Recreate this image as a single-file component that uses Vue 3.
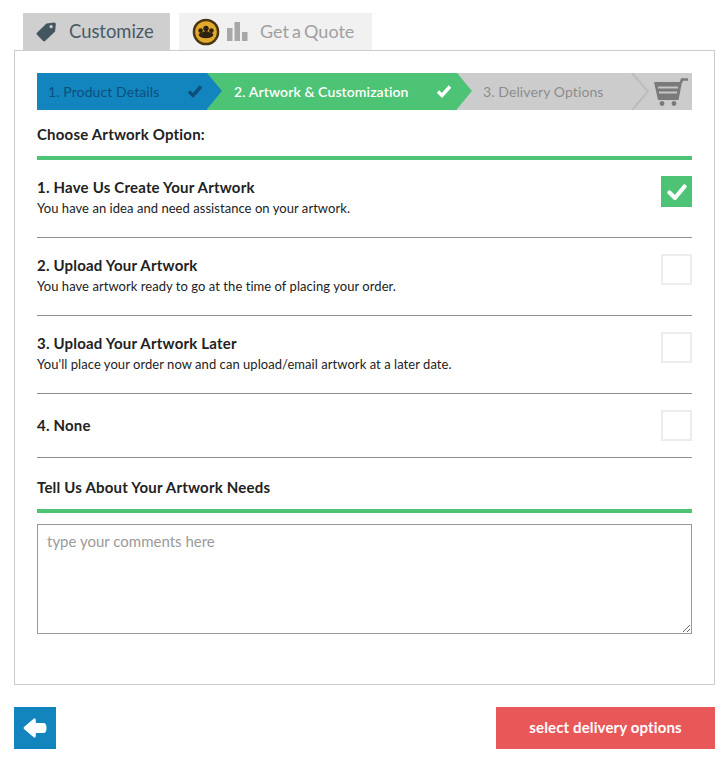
<template>
  <div class="page">
    <div class="tabs">
      <div class="tab active">
        <svg class="tag" viewBox="0 0 22 22" width="21" height="21">
          <path d="M11 2.500 L19 1.500 Q20.800 1.500 20.800 3.200 L20 11 L9.500 21 Q8.500 22 7.400 21 L1 14.400 Q0 13.300 1 12.300 Z M15.800 4.200 a1.700 1.700 0 1 0 .01 0 Z" fill="#43555f" fill-rule="evenodd" />
        </svg>
        <span>Customize</span>
      </div>
      <div class="tab quote">
        <svg class="badge" viewBox="0 0 28 28" width="28" height="28">
          <circle cx="14" cy="14" r="13.300" fill="#4a3412" />
          <circle cx="14" cy="14" r="10.800" fill="#e2aa2c" />
          <circle cx="8.600" cy="12.600" r="2.300" fill="#2e2310" />
          <circle cx="14" cy="10.500" r="2.700" fill="#2e2310" />
          <circle cx="19.400" cy="12.600" r="2.300" fill="#2e2310" />
          <path d="M6.500 17q1-3 3.500-2.500q1.500-1.500 4-1.500q2.500 0 4 1.500q2.500-.5 3.500 2.500q-2 3.200-7.500 3.200T6.500 17Z" fill="#2e2310" />
        </svg>
        <svg class="bars" viewBox="0 0 21 19" width="21" height="19">
          <rect x="0" y="6" width="5.500" height="13" fill="#a8a8a8" />
          <rect x="7.500" y="0" width="5.500" height="19" fill="#a8a8a8" />
          <rect x="15" y="10" width="5.500" height="9" fill="#a8a8a8" />
        </svg>
        <span>Get a Quote</span>
      </div>
    </div>

    <div class="panel">
      <div class="steps">
        <div class="step one">
          <span>1. Product Details</span>
          <svg class="tick" viewBox="0 0 16 14" width="16" height="14"><path d="M2 7.500l4 4 8-9" fill="none" stroke="#0e4f7a" stroke-width="3.400" /></svg>
          <i class="arrow blue"></i>
        </div>
        <div class="step two">
          <span>2. Artwork &amp; Customization</span>
          <svg class="tick" viewBox="0 0 16 14" width="16" height="14"><path d="M2 7.500l4 4 8-9" fill="none" stroke="#fff" stroke-width="3.400" /></svg>
          <i class="arrow green"></i>
        </div>
        <div class="step three">
          <span>3. Delivery Options</span>
          <svg class="chev" viewBox="0 0 20 37" width="20" height="37"><path d="M1 0l16 18.500L1 37" fill="none" stroke="#bcbcbc" stroke-width="2" /></svg>
          <svg class="cart" viewBox="0 0 34 28" width="34" height="28">
            <path d="M27 4.500l1-3h6" fill="none" stroke="#7a7a7a" stroke-width="2.600" />
            <path d="M0 4h28l-3.500 18H4Z" fill="#7a7a7a" />
            <path d="M4 9.500h20M5 14.500h18" stroke="#c6c6c6" stroke-width="1.800" />
            <circle cx="8" cy="25.500" r="2.400" fill="#7a7a7a" />
            <circle cx="20" cy="25.500" r="2.400" fill="#7a7a7a" />
          </svg>
        </div>
      </div>

      <h3 class="heading first">Choose Artwork Option:</h3>
      <div class="rule"></div>

      <div
        v-for="opt in options"
        :key="opt.title"
        class="option"
        :class="{ short: !opt.text }"
      >
        <div class="copy">
          <h4>{{ opt.title }}</h4>
          <p v-if="opt.text">{{ opt.text }}</p>
        </div>
        <div class="box" :class="{ checked: opt.checked }">
          <svg v-if="opt.checked" viewBox="0 0 20 18" width="20" height="18">
            <path d="M2.500 9.500l5.500 5.500L17.500 3.500" fill="none" stroke="#fff" stroke-width="4.200" stroke-linecap="round" stroke-linejoin="round" />
          </svg>
        </div>
      </div>

      <h3 class="heading second">Tell Us About Your Artwork Needs</h3>
      <div class="rule"></div>
      <textarea class="comments" placeholder="type your comments here"></textarea>
    </div>

    <div class="footer">
      <button class="back" aria-label="Back">
        <svg viewBox="0 0 24 22" width="24" height="22">
          <path d="M11 1.500Q12 1 12.500 2L13 6H21Q23.500 6.500 23.500 11Q23.500 15.500 21 16H13L12.500 20Q12 21 11 20.500L1 12Q0 11 1 10Z" fill="#fff" />
        </svg>
      </button>
      <button class="next">select delivery options</button>
    </div>
  </div>
</template>

<script setup>
const options = [
  { title: '1. Have Us Create Your Artwork', text: 'You have an idea and need assistance on your artwork.', checked: true },
  { title: '2. Upload Your Artwork', text: 'You have artwork ready to go at the time of placing your order.' },
  { title: '3. Upload Your Artwork Later', text: "You'll place your order now and can upload/email artwork at a later date." },
  { title: '4. None', text: '' },
];
</script>

<style>
html, body {
  margin: 0;
  background: #fff;
}
</style>

<style scoped>
.page {
  width: 722px;
  height: 759px;
  box-sizing: border-box;
  padding: 13px 7px 0 14px;
  font-family: Lato, "Open Sans", sans-serif;
  color: #222;
  overflow: hidden;
}
.tabs {
  display: flex;
  gap: 9px;
  padding-left: 9px;
  height: 37px;
}
.tab {
  display: flex;
  align-items: center;
  box-sizing: border-box;
}
.tab span {
  position: relative;
  top: -1px;
}
.tab.active {
  width: 147px;
  background: #cfcfcf;
  color: #4a5a65;
  font-size: 18.4px;
  padding-left: 13px;
}
.tag {
  margin-right: 12px;
}
.tab.quote {
  width: 193px;
  background: #f1f1f1;
  color: #a0a0a0;
  font-size: 18px;
  word-spacing: -1.5px;
  padding-left: 13px;
}
.badge {
  margin-right: 7px;
}
.bars {
  margin-right: 12px;
}
.panel {
  box-sizing: border-box;
  width: 701px;
  height: 635px;
  border: 1px solid #ccc;
  padding: 22px 22px 0;
}
.steps {
  display: flex;
  height: 37px;
  background: #ccc;
  font-size: 14px;
  letter-spacing: 0.1px;
}
.step {
  position: relative;
  display: flex;
  align-items: center;
  box-sizing: border-box;
}
.step.one {
  width: 170px;
  background: #1285bf;
  color: #0d4f7c;
  padding-left: 11px;
}
.step.one .tick {
  position: absolute;
  left: 150px;
  top: 11px;
}
.step.two {
  width: 250px;
  background: #4dc376;
  color: #fff;
  padding-left: 27px;
}
.step.two span {
  font-weight: 600;
}
.step.two .tick {
  position: absolute;
  left: 229px;
  top: 11px;
}
.step.three {
  flex: 1;
  color: #8c8c8c;
  padding-left: 26px;
}
.arrow {
  position: absolute;
  top: 0;
  left: 100%;
  width: 0;
  height: 0;
  border-top: 18.5px solid transparent;
  border-bottom: 18.5px solid transparent;
  border-left: 15px solid;
  z-index: 1;
}
.arrow.blue {
  border-left-color: #1285bf;
}
.arrow.green {
  border-left-color: #4dc376;
}
.chev {
  position: absolute;
  left: 174px;
  top: 0;
}
.cart {
  position: absolute;
  left: 197px;
  top: 5px;
}
.heading {
  margin: 0;
  font-size: 15px;
  font-weight: 700;
  line-height: 20px;
  letter-spacing: 0.2px;
  color: #222;
}
.heading.first {
  padding: 14px 0 12px;
}
.heading.second {
  padding: 19px 0 12px;
}
.rule {
  height: 4px;
  background: #4dc376;
}
.option {
  display: flex;
  justify-content: space-between;
  align-items: center;
  box-sizing: border-box;
  height: 78px;
  border-bottom: 1px solid #8f8f8f;
}
.option.short {
  height: 64px;
}
.copy {
  padding-bottom: 3px;
}
.option.short .copy {
  padding-bottom: 2px;
}
.option h4 {
  margin: 0;
  font-size: 15px;
  font-weight: 700;
  line-height: 20px;
  letter-spacing: 0.2px;
  color: #222;
}
.option p {
  margin: 2px 0 0;
  font-size: 13px;
  line-height: 18px;
  letter-spacing: 0.05px;
  color: #222;
}
.box {
  box-sizing: border-box;
  width: 31px;
  height: 31px;
  border: 2px solid #ececec;
  display: flex;
  align-items: center;
  justify-content: center;
  margin-bottom: 14px;
}
.option.short .box {
  margin-bottom: 0;
}
.box.checked {
  background: #4dc376;
  border-color: #4dc376;
}
.comments {
  display: block;
  box-sizing: border-box;
  width: 655px;
  height: 110px;
  margin-top: 11px;
  padding: 7px 9px;
  border: 1px solid #999;
  border-radius: 0;
  outline: none;
  font-family: inherit;
  font-size: 15px;
  color: #222;
}
.comments::placeholder {
  color: #9a9a9a;
  opacity: 1;
}
.footer {
  display: flex;
  justify-content: space-between;
  width: 701px;
  margin-top: 22px;
}
button {
  border: 0;
  padding: 0;
  height: 42px;
  font-family: inherit;
  cursor: pointer;
}
.back {
  width: 42px;
  background: #1285bf;
  display: flex;
  align-items: center;
  justify-content: center;
}
.next {
  width: 219px;
  padding-bottom: 2px;
  background: #e85859;
  color: #fff;
  font-size: 15px;
  font-weight: 700;
  letter-spacing: 0.13px;
}
</style>
